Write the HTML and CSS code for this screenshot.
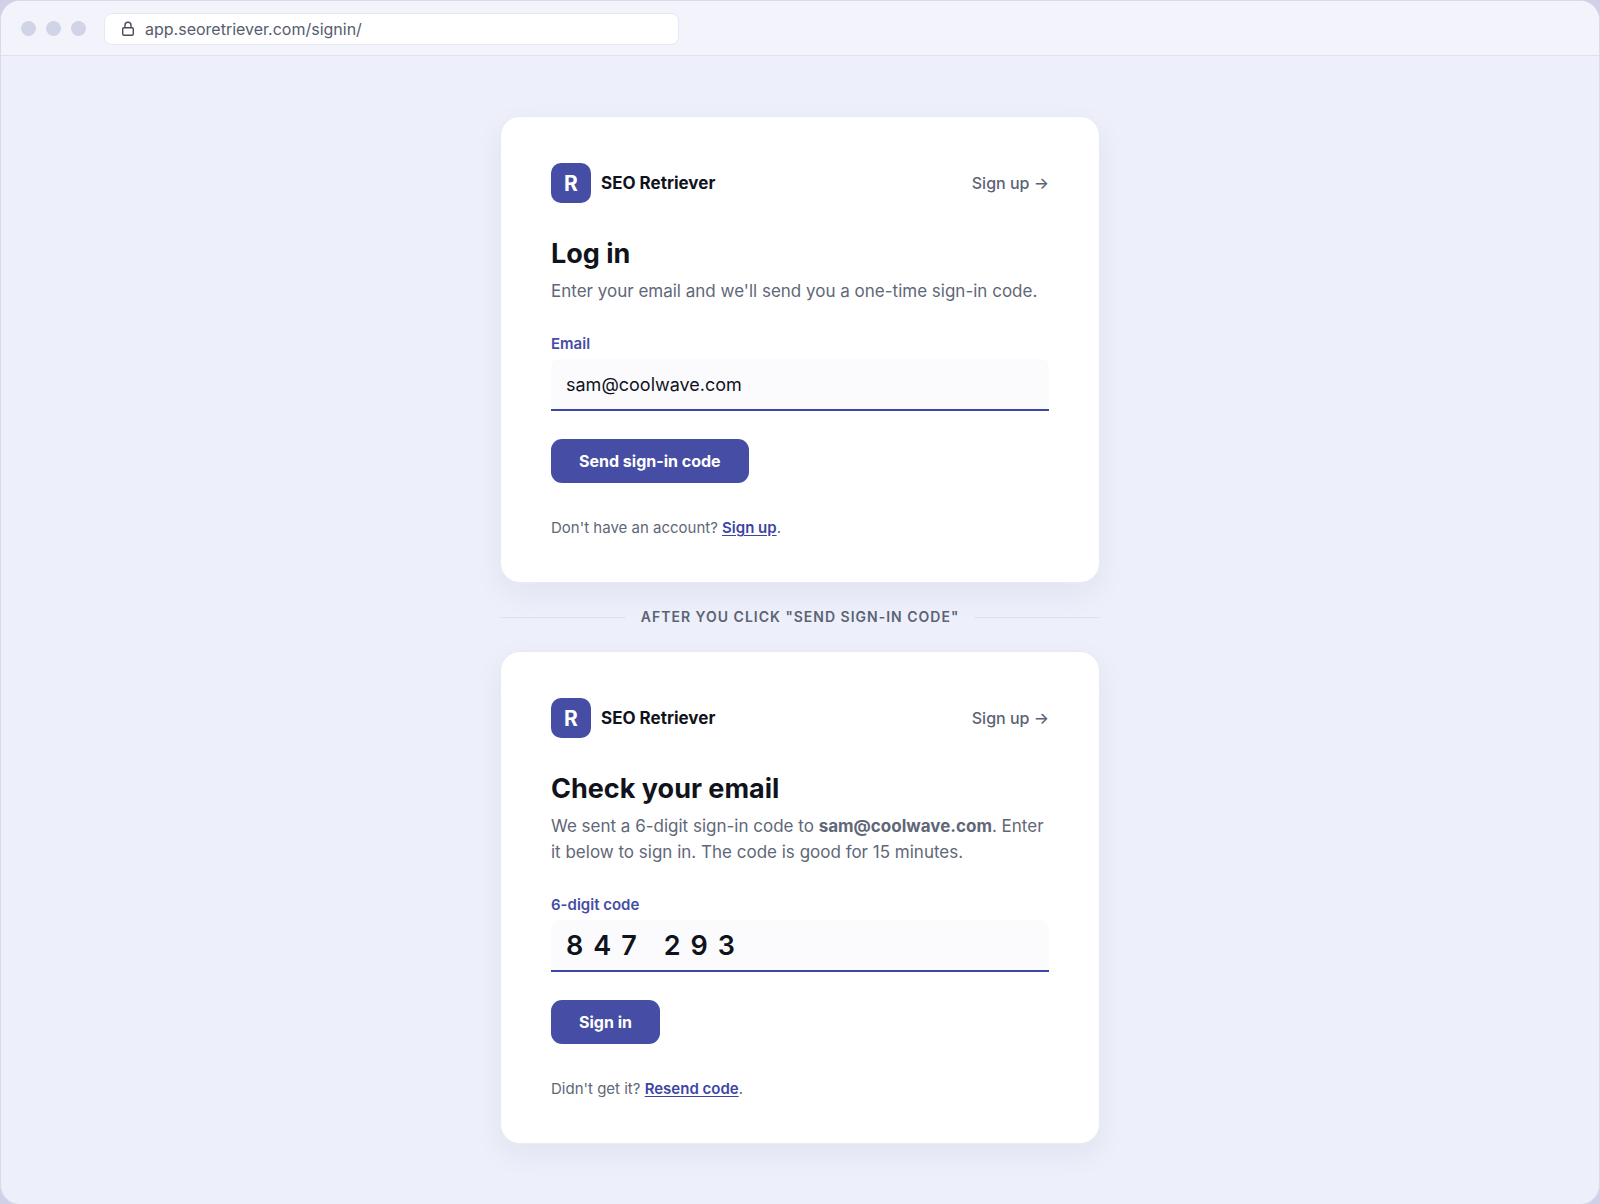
FILE: index.html
```
<!DOCTYPE html>
<html lang="en">
<head>
  <meta charset="UTF-8">
  <meta name="viewport" content="width=device-width, initial-scale=1.0">
  <title>SEO Retriever - Log in</title>
  <link rel="stylesheet" href="styles.css">
</head>
<body>
  <div class="window">
    <header class="toolbar">
      <div class="dots">
        <span class="dot"></span>
        <span class="dot"></span>
        <span class="dot"></span>
      </div>
      <div class="address">
        <svg class="lock" viewBox="0 0 14 16" aria-hidden="true">
          <rect x="1.7" y="6.7" width="10.6" height="7.6" rx="1.2"/>
          <path d="M4 6.7V4.2a3 3 0 0 1 6 0v2.5"/>
        </svg>
        <span>app.seoretriever.com/signin/</span>
      </div>
    </header>

    <main class="content">
      <section class="card">
        <div class="card-header">
          <div class="brand">
            <span class="logo">R</span>
            <span class="brand-name">SEO Retriever</span>
          </div>
          <a class="nav-link" href="#signup">Sign up →</a>
        </div>
        <h1>Log in</h1>
        <p class="intro">Enter your email and we'll send you a one-time sign-in code.</p>
        <form>
          <label for="email">Email</label>
          <input type="email" id="email" name="email" value="sam@coolwave.com">
          <button type="submit">Send sign-in code</button>
        </form>
        <p class="footnote">Don't have an account? <a href="#signup">Sign up</a>.</p>
      </section>

      <div class="divider">After you click "Send sign-in code"</div>

      <section class="card">
        <div class="card-header">
          <div class="brand">
            <span class="logo">R</span>
            <span class="brand-name">SEO Retriever</span>
          </div>
          <a class="nav-link" href="#signup">Sign up →</a>
        </div>
        <h1>Check your email</h1>
        <p class="intro">We sent a 6-digit sign-in code to <strong>sam@coolwave.com</strong>. Enter it below to sign in. The code is good for 15 minutes.</p>
        <form>
          <label for="code">6-digit code</label>
          <input class="code" type="text" id="code" name="code" inputmode="numeric" value="847 293">
          <button type="submit">Sign in</button>
        </form>
        <p class="footnote">Didn't get it? <a href="#resend">Resend code</a>.</p>
      </section>
    </main>
  </div>
</body>
</html>
```
FILE: styles.css
```
* {
  box-sizing: border-box;
}
body {
  font-family: Inter, "Liberation Sans", sans-serif;
  background-color: #d0d1e6;
  color: #10131c;
  margin: 0;
}
.window {
  min-height: 100vh;
  background-color: #edf0fa;
  border: 1px solid #dadbe5;
  border-radius: 20px;
  overflow: hidden;
}
.toolbar {
  display: flex;
  align-items: center;
  gap: 18px;
  height: 55px;
  padding: 1px 20px 0;
  background-color: #f3f4fb;
  border-bottom: 1px solid #e0e1ee;
}
.dots {
  display: flex;
  gap: 10px;
}
.dot {
  width: 15px;
  height: 15px;
  border-radius: 50%;
  background-color: #d1d3e6;
}
.address {
  display: flex;
  align-items: center;
  gap: 10px;
  flex: 0 1 575px;
  height: 32px;
  padding: 0 16px;
  background-color: white;
  border: 1px solid #e6e7f1;
  border-radius: 8px;
  font-size: 16px;
  color: #555d6e;
}
.lock {
  width: 14px;
  height: 16px;
  fill: none;
  stroke: #454c5e;
  stroke-width: 1.4;
}
.content {
  max-width: 600px;
  margin: 0 auto;
  padding: 60px 0;
}
.card {
  padding: 46px 50px 43px;
  background-color: white;
  border: 1px solid #e9eaf4;
  border-radius: 20px;
  box-shadow: 0 10px 30px rgba(30, 35, 90, 0.06);
}
.card-header {
  display: flex;
  justify-content: space-between;
  align-items: center;
}
.brand {
  display: flex;
  align-items: center;
  gap: 10px;
}
.logo {
  display: flex;
  justify-content: center;
  align-items: center;
  width: 40px;
  height: 40px;
  border-radius: 10px;
  background-color: #454da5;
  color: white;
  font-size: 21px;
  font-weight: 700;
}
.brand-name {
  font-size: 17px;
  font-weight: 700;
}
.nav-link {
  font-size: 16px;
  font-weight: 500;
  color: #5b6374;
  text-decoration: none;
}
h1 {
  margin: 34px 0 7px;
  font-size: 27px;
  line-height: 34px;
  font-weight: 700;
}
.intro {
  margin: 0 0 31px;
  font-size: 17px;
  line-height: 26px;
  color: #5f6778;
}
label {
  display: block;
  margin-bottom: 6px;
  font-size: 15px;
  line-height: 18px;
  font-weight: 600;
  color: #454da5;
}
input {
  display: block;
  width: 100%;
  height: 52px;
  padding: 0 15px;
  background-color: #fbfbfe;
  border: none;
  border-bottom: 2px solid #3d45a5;
  border-radius: 8px 8px 0 0;
  font-family: inherit;
  font-size: 18px;
  color: #10131c;
}
input:focus {
  outline: none;
  background-color: #f3f4fc;
}
.code {
  font-size: 27px;
  font-weight: 600;
  letter-spacing: 10px;
}
button {
  display: block;
  height: 44px;
  margin-top: 28px;
  padding: 0 28px;
  background-color: #454da5;
  color: white;
  border: none;
  border-radius: 11px;
  font-family: inherit;
  font-size: 16px;
  font-weight: 700;
  cursor: pointer;
}
button:hover {
  background-color: #3a4192;
}
.footnote {
  margin: 34px 0 0;
  font-size: 15px;
  line-height: 22px;
  color: #5f6778;
}
.footnote a {
  color: #3d45a5;
  font-weight: 600;
  text-underline-offset: 2px;
}
.divider {
  display: flex;
  align-items: center;
  gap: 15px;
  margin: 24px 0;
  font-size: 14px;
  line-height: 20px;
  font-weight: 600;
  letter-spacing: 1px;
  text-transform: uppercase;
  color: #5b6374;
}
.divider::before,
.divider::after {
  content: "";
  flex: 1;
  height: 1px;
  background-color: #dfe1ec;
}
```
